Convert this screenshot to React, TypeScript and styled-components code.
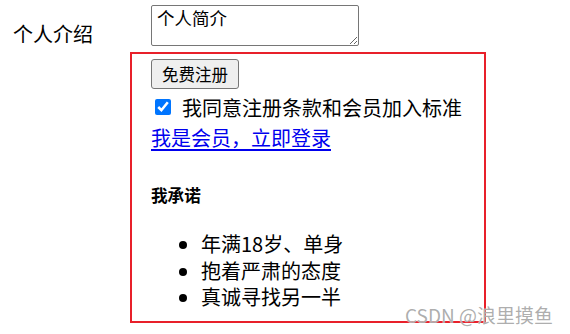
import React from 'react';
import styled, { createGlobalStyle } from 'styled-components';

const GlobalStyle = createGlobalStyle`
  html, body {
    margin: 0;
    padding: 0;
    background: #ffffff;
  }
  body {
    font-family: 'Microsoft YaHei', 'Noto Sans CJK SC', 'Noto Sans', sans-serif;
    color: #000000;
  }
`;

const Page = styled.div`
  position: relative;
  width: 570px;
  height: 334px;
  overflow: hidden;
`;

const Form = styled.div`
  display: grid;
  grid-template-columns: 117px 356px;
  row-gap: 5px;
  padding: 5px 0 0 13px;
`;

const Label = styled.div`
  font-size: 20px;
  line-height: 27px;
  padding-top: 15px;
  white-space: nowrap;
`;

const Intro = styled.textarea`
  box-sizing: border-box;
  margin: 0 0 0 21px;
  width: 208px;
  height: 41px;
  padding: 1px 5px;
  border: 1px solid #767676;
  border-radius: 2px;
  font-family: 'Microsoft YaHei', 'Noto Sans CJK SC', sans-serif;
  font-size: 17.5px;
  line-height: 21px;
  color: #000000;
  resize: both;
`;

const Promise = styled.div`
  grid-column: 2;
  box-sizing: border-box;
  height: 271px;
  border: 2px solid #e8202a;
  padding: 5px 0 0 19px;
  display: flex;
  flex-direction: column;
  align-items: flex-start;
`;

const RegisterButton = styled.button`
  box-sizing: border-box;
  height: 30px;
  padding: 0 10px;
  border: 1px solid #767676;
  border-radius: 3px;
  background: #efefef;
  font-family: 'Microsoft YaHei', 'Noto Sans CJK SC', sans-serif;
  font-size: 16.5px;
  line-height: 28px;
  color: #000000;
`;

const AgreeRow = styled.label`
  display: flex;
  align-items: center;
  height: 30px;
  margin-top: 3px;
  font-size: 20px;
`;

const Check = styled.input`
  width: 16px;
  height: 16px;
  margin: 0 11px 0 4px;
  accent-color: #0075ff;
`;

const LoginLink = styled.a`
  display: block;
  margin-top: 1px;
  height: 30px;
  font-size: 20px;
  line-height: 30px;
  color: #0000ee;
  text-decoration: underline;
  text-underline-offset: 3px;
`;

const Heading = styled.h5`
  margin: 31px 0 0;
  font-size: 16.6px;
  line-height: 22px;
  font-weight: bold;
`;

const Pledges = styled.ul`
  margin: 25px 0 0;
  padding-left: 50px;
  list-style: disc;
  font-size: 20px;
  line-height: 26.6px;
`;

const Watermark = styled.div`
  position: absolute;
  right: 17px;
  bottom: 9px;
  font-family: 'Microsoft YaHei', 'Noto Sans CJK SC', sans-serif;
  font-size: 19px;
  line-height: 20px;
  color: rgba(160, 160, 160, 0.85);
  text-shadow: 0 0 1px #ffffff;
`;

const pledges = ['年满18岁、单身', '抱着严肃的态度', '真诚寻找另一半'];

export default function App() {
  return (
    <Page>
      <GlobalStyle />
      <Form>
        <Label>个人介绍</Label>
        <Intro defaultValue="个人简介" />
        <Promise>
          <RegisterButton type="button">免费注册</RegisterButton>
          <AgreeRow>
            <Check type="checkbox" defaultChecked />
            我同意注册条款和会员加入标准
          </AgreeRow>
          <LoginLink href="#">我是会员，立即登录</LoginLink>
          <Heading>我承诺</Heading>
          <Pledges>
            {pledges.map((item) => (
              <li key={item}>{item}</li>
            ))}
          </Pledges>
        </Promise>
      </Form>
      <Watermark>CSDN @浪里摸鱼</Watermark>
    </Page>
  );
}
